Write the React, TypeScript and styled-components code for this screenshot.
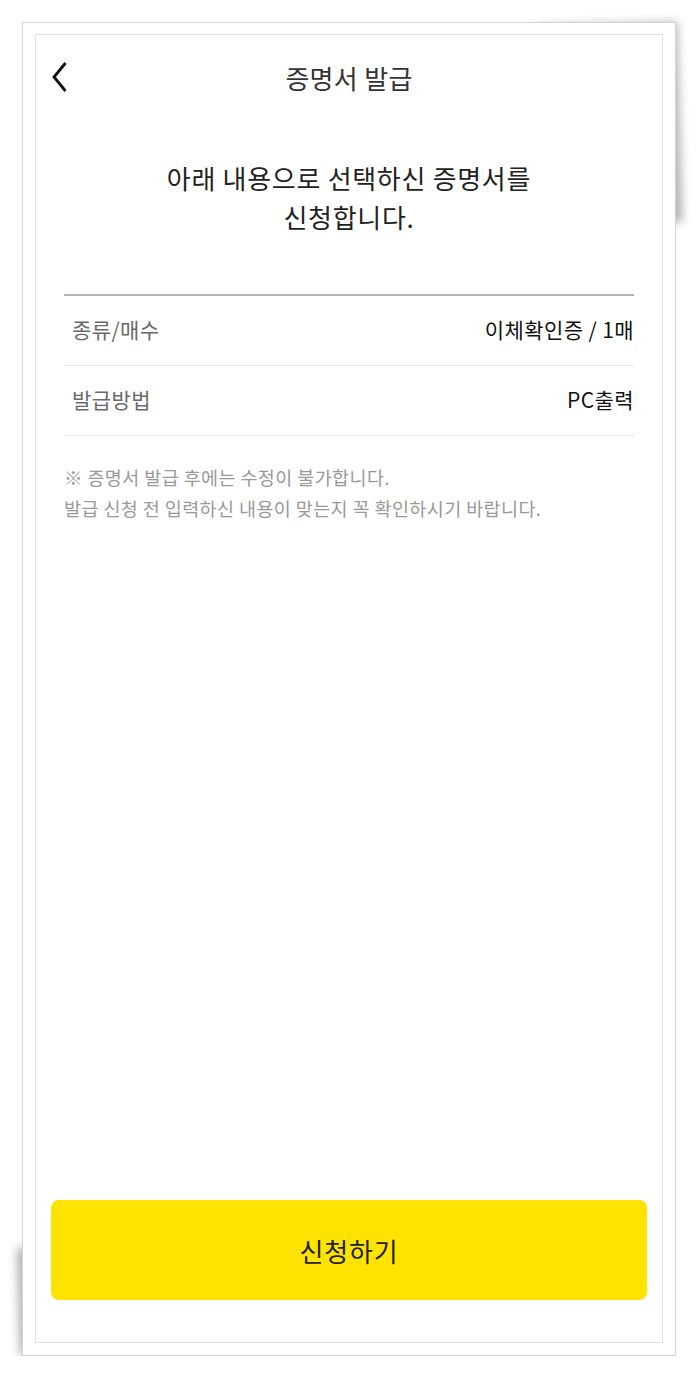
import styled, { createGlobalStyle } from "styled-components";

const GlobalStyle = createGlobalStyle`
  html {
    background: #fff;
  }
  body {
    margin: 0;
    padding: 0;
    font-family: "Noto Sans CJK KR", "Noto Sans", sans-serif;
    color: #222;
  }
`;

type RowType = {
  label: string;
  value: string;
};

const rows: RowType[] = [
  { label: "종류/매수", value: "이체확인증 / 1매" },
  { label: "발급방법", value: "PC출력" },
];

const App = () => {
  return (
    <>
      <GlobalStyle />
      <StyledPage>
        <StyledFrame>
          <StyledScreen>
            <StyledHeader>
              <StyledBackButton aria-label="뒤로">
                <svg width="16" height="32" viewBox="0 0 16 32" fill="none">
                  <path
                    d="M13.5 2 L2 16 L13.5 30"
                    stroke="#111"
                    strokeWidth="2.8"
                    strokeLinecap="butt"
                    strokeLinejoin="miter"
                  />
                </svg>
              </StyledBackButton>
              <StyledTitle>증명서 발급</StyledTitle>
              <span />
            </StyledHeader>

            <StyledBody>
              <StyledHeading>
                아래 내용으로 선택하신 증명서를
                <br />
                신청합니다.
              </StyledHeading>

              <StyledTable>
                {rows.map((row) => (
                  <StyledRow key={row.label}>
                    <StyledLabel>{row.label}</StyledLabel>
                    <StyledValue>{row.value}</StyledValue>
                  </StyledRow>
                ))}
              </StyledTable>

              <StyledNotice>
                ※ 증명서 발급 후에는 수정이 불가합니다.
                <br />
                발급 신청 전 입력하신 내용이 맞는지 꼭 확인하시기 바랍니다.
              </StyledNotice>
            </StyledBody>

            <StyledSubmit>신청하기</StyledSubmit>
          </StyledScreen>
        </StyledFrame>
      </StyledPage>
    </>
  );
};

export default App;

const StyledPage = styled.div`
  padding: 22px 0 0 22px;
`;

const StyledFrame = styled.div`
  position: relative;
  box-sizing: border-box;
  width: 654px;
  height: 1334px;
  padding: 11px 12px 12px 12px;
  border: 1px solid #d4d4d4;
  background: #fff;

  &::before,
  &::after {
    content: "";
    position: absolute;
    z-index: -1;
    background: #fff;
  }

  /* lifted corner shadows */
  &::before {
    top: 5px;
    right: 2px;
    width: 22%;
    height: 15%;
    box-shadow: 7px -4px 10px rgba(0, 0, 0, 0.3);
    transform: rotate(-1.5deg);
  }

  &::after {
    bottom: 10px;
    left: 2px;
    width: 32%;
    height: 8%;
    box-shadow: -7px 7px 10px rgba(0, 0, 0, 0.3);
    transform: rotate(-1.5deg);
  }
`;

const StyledScreen = styled.div`
  box-sizing: border-box;
  height: 100%;
  border: 1px solid #e2e2e2;
  background: #fff;
  display: flex;
  flex-direction: column;
`;

const StyledHeader = styled.header`
  height: 84px;
  display: grid;
  grid-template-columns: 1fr auto 1fr;
  align-items: center;
  padding: 0 16px;
`;

const StyledBackButton = styled.button`
  justify-self: start;
  display: flex;
  padding: 0;
  margin: 0;
  border: 0;
  background: none;
  cursor: pointer;
`;

const StyledTitle = styled.h1`
  margin: 0;
  font-size: 26px;
  font-weight: 400;
  color: #333;
  letter-spacing: 0.3px;
`;

const StyledBody = styled.main`
  padding: 0 28px;
`;

const StyledHeading = styled.p`
  margin: 39px 0 0;
  text-align: center;
  font-size: 26px;
  line-height: 39px;
  color: #222;
  letter-spacing: 0.7px;
`;

const StyledTable = styled.dl`
  margin: 58px 0 0;
  border-top: 2px solid #b4b4b4;
`;

const StyledRow = styled.div`
  height: 70px;
  box-sizing: border-box;
  display: flex;
  justify-content: space-between;
  align-items: center;
  padding: 0 0 4px 8px;
  border-bottom: 1px solid #e8e8e8;
  font-size: 21px;
  letter-spacing: 0.4px;
`;

const StyledLabel = styled.dt`
  color: #6a6a6a;
`;

const StyledValue = styled.dd`
  margin: 0;
  color: #111;
`;

const StyledNotice = styled.p`
  margin: 26px 0 0;
  font-size: 18.5px;
  line-height: 31px;
  color: #999;
  letter-spacing: 0.4px;
`;

const StyledSubmit = styled.button`
  margin: auto 15px 42px;
  height: 100px;
  border: 0;
  border-radius: 8px;
  background: #ffe300;
  font-family: inherit;
  font-size: 26px;
  color: #222;
  letter-spacing: 0.8px;
  cursor: pointer;
`;
